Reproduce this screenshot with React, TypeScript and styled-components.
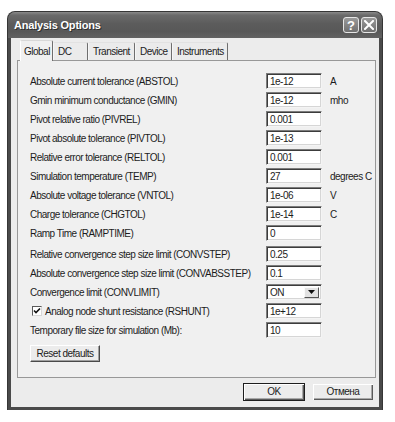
import React from 'react'
import styled, { createGlobalStyle } from 'styled-components'

const GlobalStyle = createGlobalStyle`
  html, body {
    margin: 0;
    padding: 0;
    background: #ffffff;
  }
  body {
    font-family: "Liberation Sans", Arial, sans-serif;
    font-size: 10px;
    letter-spacing: -0.5px;
    color: #1c1c1c;
  }
`

type Param = {
  label: string
  value: string
  unit?: string
  gapTop?: boolean
  select?: boolean
  check?: boolean
}

const params: Param[] = [
  { label: 'Absolute current tolerance (ABSTOL)', value: '1e-12', unit: 'A' },
  { label: 'Gmin minimum conductance (GMIN)', value: '1e-12', unit: 'mho' },
  { label: 'Pivot relative ratio (PIVREL)', value: '0.001' },
  { label: 'Pivot absolute tolerance (PIVTOL)', value: '1e-13' },
  { label: 'Relative error tolerance (RELTOL)', value: '0.001' },
  { label: 'Simulation temperature (TEMP)', value: '27', unit: 'degrees C' },
  { label: 'Absolute voltage tolerance (VNTOL)', value: '1e-06', unit: 'V' },
  { label: 'Charge tolerance (CHGTOL)', value: '1e-14', unit: 'C' },
  { label: 'Ramp Time (RAMPTIME)', value: '0' },
  { label: 'Relative convergence step size limit (CONVSTEP)', value: '0.25', gapTop: true },
  { label: 'Absolute convergence step size limit (CONVABSSTEP)', value: '0.1' },
  { label: 'Convergence limit (CONVLIMIT)', value: 'ON', select: true },
  { label: 'Analog node shunt resistance (RSHUNT)', value: '1e+12', check: true },
  { label: 'Temporary file size for simulation (Mb):', value: '10' },
]

const tabs = [
  { name: 'Global', width: 33 },
  { name: 'DC', width: 35 },
  { name: 'Transient', width: 47 },
  { name: 'Device', width: 37 },
  { name: 'Instruments', width: 56 },
]

const App: React.FC = () => {
  return (
    <Page>
      <GlobalStyle />
      <Window>
        <TitleBar>
          <Title>Analysis Options</Title>
          <CaptionButtons>
            <CaptionButton>?</CaptionButton>
            <CaptionButton>
              <svg width="10" height="10" viewBox="0 0 10 10">
                <path d="M1 1 L9 9 M9 1 L1 9" stroke="#fff" strokeWidth="2" strokeLinecap="square" />
              </svg>
            </CaptionButton>
          </CaptionButtons>
        </TitleBar>
        <Body>
          <TabStrip>
            {tabs.map((t, i) => (
              <Tab key={t.name} $width={t.width} $active={i === 0}>
                {t.name}
              </Tab>
            ))}
          </TabStrip>
          <Panel>
            {params.map((p) => (
              <Row key={p.label} $gapTop={p.gapTop}>
                {p.check ? (
                  <CheckLabel>
                    <CheckBox>
                      <svg width="8" height="8" viewBox="0 0 8 8">
                        <path d="M1 3.5 L3 5.5 L7 1.5" stroke="#111" strokeWidth="1.6" fill="none" />
                      </svg>
                    </CheckBox>
                    {p.label}
                  </CheckLabel>
                ) : (
                  <Label>{p.label}</Label>
                )}
                {p.select ? (
                  <SelectBox>
                    <span>{p.value}</span>
                    <DropButton>
                      <svg width="7" height="4" viewBox="0 0 7 4">
                        <path d="M0 0 L7 0 L3.5 4 Z" fill="#111" />
                      </svg>
                    </DropButton>
                  </SelectBox>
                ) : (
                  <Field>{p.value}</Field>
                )}
                <Unit>{p.unit}</Unit>
              </Row>
            ))}
            <ResetButton>Reset defaults</ResetButton>
          </Panel>
          <Footer>
            <DialogButton $default>OK</DialogButton>
            <DialogButton>Отмена</DialogButton>
          </Footer>
        </Body>
      </Window>
    </Page>
  )
}

const Page = styled.div`
  padding: 12px 0 0 8px;
`

const Window = styled.div`
  width: 374px;
  height: 398px;
  box-sizing: border-box;
  display: flex;
  flex-direction: column;
  background: #4a4a4a;
  border-radius: 7px 7px 0 0;
  padding: 0 3px 3px 3px;
  box-shadow: 0 0 0 1px #363636;
`

const TitleBar = styled.div`
  height: 26px;
  margin: 0 -3px;
  padding: 0 5px 0 6px;
  display: flex;
  align-items: center;
  justify-content: space-between;
  border-radius: 7px 7px 0 0;
  background: linear-gradient(#8a8a8a 0%, #6a6a6a 12%, #5c5c5c 45%, #585858 75%, #626262 100%);
`

const Title = styled.div`
  font-weight: bold;
  font-size: 11px;
  letter-spacing: -0.2px;
  color: #ffffff;
  text-shadow: 1px 1px 0 #2e2e2e;
`

const CaptionButtons = styled.div`
  display: flex;
  gap: 2px;
`

const CaptionButton = styled.div`
  width: 16px;
  height: 16px;
  box-sizing: border-box;
  border: 1px solid #e6e6e6;
  border-radius: 3px;
  background: linear-gradient(#9a9a9a, #707070);
  color: #fff;
  font-weight: bold;
  font-size: 13px;
  letter-spacing: 0;
  display: flex;
  align-items: center;
  justify-content: center;
`

const Body = styled.div`
  flex: 1;
  background: #ececec;
  padding: 4px 3px 0 6px;
  display: flex;
  flex-direction: column;
`

const TabStrip = styled.div`
  display: flex;
  height: 18px;
  margin-left: 3px;
  align-items: flex-end;
  position: relative;
  z-index: 1;
`

const Tab = styled.div<{ $width: number; $active?: boolean }>`
  width: ${(p) => p.$width}px;
  height: ${(p) => (p.$active ? 21 : 18)}px;
  margin-bottom: ${(p) => (p.$active ? -1 : 0)}px;
  box-sizing: border-box;
  padding-left: ${(p) => (p.$active ? 3 : 4)}px;
  padding-top: ${(p) => (p.$active ? 5 : 3)}px;
  background: ${(p) => (p.$active ? '#f0f0f0' : '#ebebeb')};
  border-top: 1px solid ${(p) => (p.$active ? '#d8d8d8' : '#e2e2e2')};
  border-left: 1px solid ${(p) => (p.$active ? '#ffffff' : '#f6f6f6')};
  border-right: 1px solid #6e6e6e;
  border-radius: 2px 2px 0 0;
  white-space: nowrap;
`

const Panel = styled.div`
  height: 318px;
  box-sizing: border-box;
  border: 1px solid #989898;
  background: #f0f0f0;
  padding: 12px 0 0 12px;
  display: flex;
  flex-direction: column;
  align-items: flex-start;
`

const Row = styled.div<{ $gapTop?: boolean }>`
  display: grid;
  grid-template-columns: 228px 56px auto;
  column-gap: 8px;
  align-items: center;
  height: 16px;
  margin-bottom: 3px;
  margin-top: ${(p) => (p.$gapTop ? 2 : 0)}px;
`

const Label = styled.div`
  white-space: nowrap;
`

const CheckLabel = styled.div`
  display: flex;
  align-items: center;
  gap: 3px;
  padding-left: 2px;
  white-space: nowrap;
`

const CheckBox = styled.div`
  width: 10px;
  height: 10px;
  box-sizing: border-box;
  background: #fff;
  border-top: 1px solid #5a5a5a;
  border-left: 1px solid #5a5a5a;
  border-right: 1px solid #d8d8d8;
  border-bottom: 1px solid #d8d8d8;
  display: flex;
  align-items: center;
  justify-content: center;
`

const Field = styled.div`
  height: 16px;
  box-sizing: border-box;
  background: #fff;
  border-top: 1px solid #7c7c7c;
  border-left: 1px solid #7c7c7c;
  border-right: 1px solid #f4f4f4;
  border-bottom: 1px solid #f4f4f4;
  box-shadow: inset 1px 1px 0 #3c3c3c, inset -1px -1px 0 #d6d6d6;
  padding: 1px 0 0 3px;
  line-height: 13px;
`

const SelectBox = styled(Field)`
  display: flex;
  justify-content: space-between;
  padding: 0 2px 0 3px;
  align-items: center;
`

const DropButton = styled.div`
  width: 15px;
  height: 11px;
  box-sizing: border-box;
  background: #e2e2e2;
  border-top: 1px solid #fafafa;
  border-left: 1px solid #fafafa;
  border-right: 1px solid #555;
  border-bottom: 1px solid #555;
  display: flex;
  align-items: center;
  justify-content: center;
`

const Unit = styled.div`
  white-space: nowrap;
`

const ResetButton = styled.div`
  margin-top: 4px;
  width: 70px;
  height: 17px;
  box-sizing: border-box;
  background: #ececec;
  border-top: 1px solid #ffffff;
  border-left: 1px solid #ffffff;
  border-right: 1px solid #4a4a4a;
  border-bottom: 1px solid #4a4a4a;
  box-shadow: inset -1px -1px 0 #a0a0a0;
  text-align: center;
  line-height: 15px;
  white-space: nowrap;
`

const Footer = styled.div`
  display: flex;
  justify-content: flex-end;
  gap: 7px;
  padding: 5px 2px 0 0;
`

const DialogButton = styled.div<{ $default?: boolean }>`
  width: 62px;
  height: 18px;
  box-sizing: border-box;
  background: #ececec;
  border: 1px solid ${(p) => (p.$default ? '#1e1e1e' : '#ececec')};
  box-shadow: inset 1px 1px 0 #ffffff, inset -1px -1px 0 #5a5a5a, inset -2px -2px 0 #a8a8a8;
  text-align: center;
  line-height: 16px;
`

export default App
